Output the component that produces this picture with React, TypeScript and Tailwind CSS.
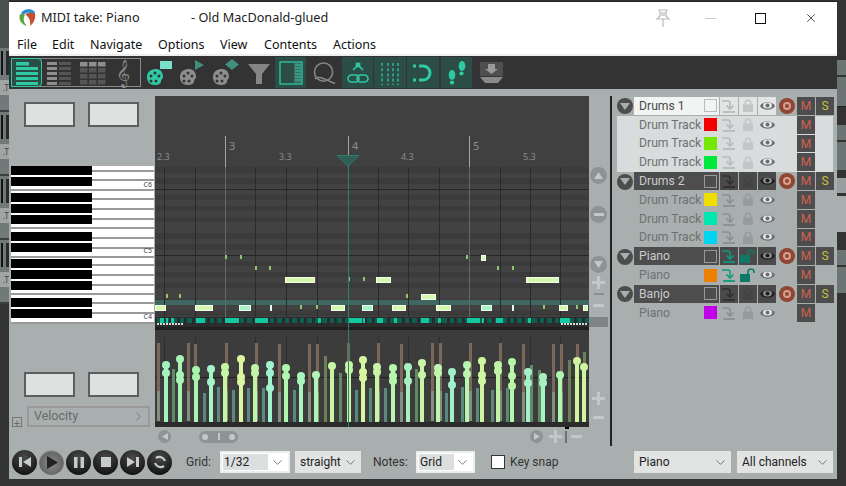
import { ChevronDown, ChevronRight, X } from 'lucide-react';

const FONT = "font-['Noto_Sans','Open_Sans',sans-serif]";
const UI_FONT = "font-['Roboto','Noto_Sans',sans-serif]";

const BLACK_KEYS = [166, 176.5, 193, 204, 215, 232, 243, 259, 270, 281, 298, 309];
const WHITE_LINES = [170, 179, 189, 198, 208, 218, 227, 237, 247, 256, 264, 274, 284, 293, 302, 312, 322];
const BEATS = [164, 195, 255, 286, 317, 378, 408, 439, 500, 530, 560];
const BARS = [225, 348, 469];

// x, y, width, colour kind (l = lime, t = teal, d = tiny dark green)
const NOTES: [number, number, number, string][] = [
  [225, 255, 1.5, 'd'], [240, 255, 2, 'd'], [255, 266, 1.5, 'd'], [269, 266, 2, 'd'],
  [285, 277, 30, 'l'], [348, 277, 2, 'd'], [363, 277, 1.5, 'd'], [376, 277, 15, 'l'],
  [166, 294, 1.5, 'd'], [179, 294, 2, 'd'], [406, 294, 1.5, 'd'], [421, 294, 15, 'l'],
  [155, 305, 11, 'l'], [195, 305, 18, 'l'], [239, 305, 12, 't'], [270, 305, 2, 't'],
  [300, 305, 2, 'd'], [316, 305, 2, 'd'], [331, 305, 14, 'l'], [362, 305, 11, 't'],
  [392, 305, 14, 'l'], [436, 305, 15, 'l'], [481, 305, 11, 't'], [512, 305, 1.5, 't'],
  [543, 305, 2, 'd'], [559, 305, 9, 'l'], [576, 305, 2, 'd'], [583, 305, 5, 'l'],
  [466, 255, 2, 'd'], [481, 255, 4.5, 'l'], [497, 266, 2, 'd'], [512, 266, 1.5, 'd'], [526, 277, 33, 'l'],
];

const STRIP_BRIGHT: [number, number][] = [
  [160, 4], [166, 2], [171, 3], [196, 9], [225, 14], [255, 13], [318, 3], [348, 14], [363, 2],
  [377, 6], [394, 3], [421, 8], [438, 3], [467, 13], [482, 2], [496, 7], [528, 3], [560, 10],
];

// x, knob tops, colour
const STEMS: [number, number[], string][] = [
  [165, [365, 373], '#a3f2bb'], [179, [359, 375, 380], '#a9f3b5'], [195, [370, 377], '#a8f5b0'],
  [210, [369, 382], '#a5f3c8'], [224, [367, 373], '#c6f5a5'], [240, [359, 377, 382], '#dcf5a0'],
  [254, [368, 373], '#c0f5a8'], [269, [365, 373, 388], '#a0f3d0'], [285, [368, 376], '#b0f5b0'],
  [300, [376, 381], '#a8f5c0'], [315, [375], '#b0f5b5'], [331, [366], '#c8f5a5'],
  [348, [365, 370], '#c8f5a5'], [362, [360, 372, 378], '#d8f5a0'], [376, [367, 372], '#c8f5a8'],
  [392, [368, 376, 381], '#b8f5b0'], [407, [367, 381], '#a8f0c0'], [421, [363, 375], '#c8f5a8'],
  [437, [368, 373], '#c0f5b0'], [451, [372, 385], '#a0f0c8'], [466, [365, 374], '#b8f5b0'],
  [481, [361, 375, 381], '#d0f5a0'], [497, [365, 371], '#c0f5a8'], [511, [362, 376, 386], '#b8f5a8'],
  [527, [372, 383], '#a5f0c8'], [542, [377, 383], '#a8f0c0'], [559, [375], '#b0f5b0'],
  [576, [361], '#d0f5a0'], [583, [367], '#d0f5a0'],
];
const BROWN = [157, 187, 194, 225, 255, 278, 308, 316, 347, 377, 400, 431, 439, 469, 499, 522, 552, 560, 576];
const DIM: [number, number, string][] = [
  [172, 369, '#5f8a63'], [203, 393, '#5a8a7e'], [217, 387, '#5a8a7e'], [232, 390, '#5a8a7e'], [247, 388, '#5a8a7e'],
  [262, 388, '#5a8a7e'], [293, 390, '#5a8a7e'], [324, 356, '#6b7f58'], [339, 373, '#5f8a63'], [355, 390, '#5a8a7e'],
  [369, 388, '#5a8a7e'], [384, 388, '#5a8a7e'], [415, 369, '#5f8a63'], [445, 393, '#5a8a7e'], [461, 387, '#5a8a7e'],
  [476, 388, '#5a8a7e'], [491, 390, '#5a8a7e'], [506, 388, '#5a8a7e'], [530, 365, '#5f8a63'], [538, 370, '#5f8a63'],
  [568, 360, '#6b7f58'], [583, 352, '#6b7f58'],
];

const NOTE_COLOR: Record<string, string> = {
  l: 'bg-[#d6f7b0] border border-white/70',
  t: 'bg-[#aaf3c8] border border-white/70',
  d: 'bg-[#8fc66f]',
};

// pitch class rows from the top of the roll, true = black key row
const ROWS = [true, false, true, false, false, true, false, true, false, true, false, false, true, false, true, false];

function EmptyButton() {
  return <div className="w-[51px] h-[25px] bg-[#dfe1e0] border-2 border-[#5c5f5f]" />;
}

function Logo() {
  return (
    <svg width="20" height="20" viewBox="0 0 20 20" className="shrink-0">
      <path d="M3 5 A9 9 0 0 1 17 4 L15 7 A6 6 0 0 0 5 8 Z" fill="#2b8fc9" />
      <path d="M2 6 C0 12 4 17 9 18 C5 14 5 10 7 7 Z" fill="#5aa63c" />
      <path d="M7 6 C11 4 15 6 17 5 C18 10 16 15 12 18 C13 13 11 9 7 6 Z" fill="#c8502e" />
    </svg>
  );
}

function TitleBar() {
  return (
    <div className="h-[32px] flex items-center pl-[9px] pr-[19px] text-[#222] text-[12.7px]">
      <Logo />
      <span className="ml-[3px] w-[150px]">MIDI take: Piano</span>
      <span>- Old MacDonald-glued</span>
      <svg width="18" height="20" viewBox="0 0 18 20" className="ml-auto mr-[33px]" fill="none" stroke="#b9b9b9" strokeWidth="1.2">
        <path d="M5 2 H13 L12 4 V8 L15 11 H3 L6 8 V4 Z M9 11 V19 M8 4 V8 M10 4 V8" />
      </svg>
      <div className="w-[11px] h-px bg-[#c9c9c9] mr-[39px]" />
      <div className="w-[11px] h-[11px] border border-[#111] mr-[38px]" />
      <X size={14} strokeWidth={1.2} color="#111" />
    </div>
  );
}

function MenuBar() {
  const items = [
    ['File', 'w-[35px]'], ['Edit', 'w-[38px]'], ['Navigate', 'w-[68px]'], ['Options', 'w-[62px]'],
    ['View', 'w-[44px]'], ['Contents', 'w-[69px]'], ['Actions', 'w-[60px]'],
  ];
  return (
    <div className="h-[22px] flex items-center pl-[8px] pt-[3px] text-[12.5px] text-[#111] bg-white border-b-2 border-[#eee]">
      {items.map(([label, w]) => (
        <span key={label} className={w}>{label}</span>
      ))}
    </div>
  );
}

function PianoBars() {
  const c = '#2fc9a4';
  return (
    <svg width="22" height="24" viewBox="0 0 22 24">
      <rect x="0" y="1" width="13" height="3.5" fill={c} />
      <rect x="0" y="6" width="22" height="3" fill={c} />
      <rect x="0" y="11" width="22" height="3" fill={c} />
      <rect x="0" y="16" width="22" height="3" fill={c} />
      <rect x="0" y="21" width="22" height="3" fill={c} />
    </svg>
  );
}

function Lanes() {
  return (
    <svg width="26" height="24" viewBox="0 0 26 24">
      {[1, 6, 11, 16, 21].map((y) => (
        <g key={y}>
          <rect x="0" y={y} width="10" height="3" fill="#8e8e8e" />
          <rect x="12" y={y} width="12" height="3" fill="#555" />
        </g>
      ))}
    </svg>
  );
}

function Cells() {
  return (
    <svg width="26" height="24" viewBox="0 0 26 24">
      {[0, 9, 18].map((x) =>
        [1, 7, 13, 19].map((y) => (
          <rect key={`${x}-${y}`} x={x} y={y} width="7.5" height="4.5" fill={y === 1 ? '#8e8e8e' : '#555'} />
        )),
      )}
    </svg>
  );
}

function Palette({ color, shape, shapeColor }: { color: string; shape: 'rect' | 'tri' | 'dia'; shapeColor: string }) {
  return (
    <svg width="28" height="28" viewBox="0 0 28 28">
      <path d="M1 18 C1 12 6 10 10 10 C15 10 17 14 17 18 C17 20 15 20 15 22 C15 25 12 26 9 26 C4 26 1 23 1 18 Z" fill={color} />
      <circle cx="5" cy="17" r="1.5" fill="#333" />
      <circle cx="9" cy="14" r="1.5" fill="#333" />
      <circle cx="13" cy="17" r="1.5" fill="#333" />
      <circle cx="5" cy="22" r="1.5" fill="#333" />
      <circle cx="10" cy="22" r="1.5" fill="#333" />
      {shape === 'rect' && <rect x="14" y="2" width="12" height="8" fill={shapeColor} />}
      {shape === 'tri' && <path d="M16 1 L25 6 L16 11 Z" fill={shapeColor} />}
      {shape === 'dia' && <path d="M20 0 L27 5.5 L20 11 L13 5.5 Z" fill={shapeColor} />}
    </svg>
  );
}

function ActiveTool({ children, width }: { children: React.ReactNode; width: string }) {
  return <div className={`${width} h-[31px] bg-[#2c4d46] flex items-center justify-center`}>{children}</div>;
}

function Toolbar() {
  return (
    <div className="h-[33px] bg-[#333] flex items-center pl-[2px]">
      <div className="w-[130px] h-[29px] border border-[#8a8a8a] flex items-center">
        <div className="w-[31px] h-[29px] -ml-px bg-[#2c4d46] border border-[#2fc9a4] rounded-r-sm flex items-center justify-center">
          <PianoBars />
        </div>
        <div className="w-[36px] flex justify-center"><Lanes /></div>
        <div className="w-[30px] flex justify-center"><Cells /></div>
        <span className="w-[30px] text-center text-[24px] leading-none text-[#8e8e8e] font-['DejaVu_Sans',sans-serif]">𝄞</span>
      </div>
      <div className="ml-[5px] w-[33px]"><Palette color="#2fc9a4" shape="rect" shapeColor="#79e0c9" /></div>
      <div className="w-[33px]"><Palette color="#8e8e8e" shape="tri" shapeColor="#3f8f7c" /></div>
      <div className="w-[37px]"><Palette color="#8e8e8e" shape="dia" shapeColor="#3f8f7c" /></div>
      <svg width="22" height="22" viewBox="0 0 22 22" className="ml-[-1px]">
        <path d="M0 2 H22 L14 12 V22 H8 V12 Z" fill="#858585" />
      </svg>
      <div className="ml-[5px]">
        <ActiveTool width="w-[31px]">
          <svg width="24" height="24" viewBox="0 0 24 24" fill="none">
            <rect x="1" y="1" width="22" height="22" stroke="#2fc9a4" strokeWidth="1.3" />
            <rect x="15" y="2" width="7" height="20" fill="#3f6f64" />
            <path d="M16 4 H22 M16 7 H22 M16 10 H22 M16 13 H22 M16 16 H22 M16 19 H22" stroke="#2fc9a4" strokeWidth="1" />
          </svg>
        </ActiveTool>
      </div>
      <svg width="23" height="24" viewBox="0 0 24 24" fill="none" stroke="#868686" strokeWidth="1.6" className="ml-[7px] mr-[6px]">
        <circle cx="11" cy="11" r="9.5" />
        <path d="M2 18 C8 14 14 20 23 23" />
      </svg>
      <ActiveTool width="w-[31px] mr-[1px]">
        <svg width="22" height="24" viewBox="0 0 22 24" fill="none" stroke="#2fc9a4" strokeWidth="1.6">
          <path d="M6 9 L11 4 L16 9" />
          <rect x="9.5" y="2.5" width="3" height="3" fill="#2fc9a4" />
          <rect x="1" y="14" width="11" height="7" rx="3.5" />
          <rect x="10" y="14" width="11" height="7" rx="3.5" />
        </svg>
      </ActiveTool>
      <ActiveTool width="w-[32px] mr-[1px]">
        <svg width="18" height="24" viewBox="0 0 18 24" stroke="#2fc9a4" strokeWidth="1.3" strokeDasharray="3 2.2">
          <path d="M1 2 V24 M7 2 V24 M12 2 V24 M17 2 V24" />
        </svg>
      </ActiveTool>
      <ActiveTool width="w-[32px] mr-[2px]">
        <svg width="20" height="20" viewBox="0 0 20 20" fill="none" stroke="#2fc9a4" strokeWidth="3">
          <path d="M6 3 H10 A7 7 0 0 1 10 17 H6 M0 3 H3 M0 17 H3" />
        </svg>
      </ActiveTool>
      <ActiveTool width="w-[31px]">
        <svg width="20" height="24" viewBox="0 0 20 24" fill="#2fc9a4">
          <ellipse cx="5" cy="14" rx="3.3" ry="5" />
          <ellipse cx="5" cy="21.5" rx="2.2" ry="2" />
          <ellipse cx="15" cy="5" rx="3.3" ry="5" />
          <ellipse cx="14.5" cy="12.5" rx="2.2" ry="2" />
        </svg>
      </ActiveTool>
      <svg width="23" height="21" viewBox="0 0 23 21" className="ml-[8px]">
        <rect x="0" y="0" width="23" height="14" fill="#4f4f4f" />
        <path d="M8 2 H15 V7 H18 L11.5 12 L5 7 H8 Z" fill="#999" />
        <path d="M0 15 H23 L18 21 H5 Z" fill="#8a8a8a" />
      </svg>
    </div>
  );
}

function Piano() {
  return (
    <div className="relative w-[143px] h-[157px] ml-[2px] mt-[39px] bg-white">
      {WHITE_LINES.map((y) => (
        <div key={y} className="absolute left-0 right-0 h-[1.5px] bg-[#9a9a9a]" style={{ top: y - 166 }} />
      ))}
      {BLACK_KEYS.map((y) => (
        <div key={y} className="absolute left-0 w-[81px] h-[9px] bg-black" style={{ top: y - 166 }} />
      ))}
      {[['C6', 181], ['C5', 247], ['C4', 313]].map(([label, y]) => (
        <span
          key={label}
          className="absolute right-[2px] text-[7px] leading-[8px] text-[#444]"
          style={{ top: (y as number) - 166 }}
        >
          {label}
        </span>
      ))}
    </div>
  );
}

function LeftPanel() {
  return (
    <div className="w-[146px] shrink-0 pt-[13px] flex flex-col">
      <div className="flex gap-[13px] pl-[15px]"><EmptyButton /><EmptyButton /></div>
      <Piano />
      <div className="flex gap-[13px] pl-[15px] mt-[49px]"><EmptyButton /><EmptyButton /></div>
      <div className="flex items-end mt-[9px] pl-[3px]">
        <div className="w-[10px] h-[10px] border border-[#777] mr-[5px] flex items-center justify-center text-[#666] text-[11px] leading-none">+</div>
        <div className={`w-[123px] h-[21px] border-2 border-[#999] flex items-center justify-between pl-[5px] pr-[2px] text-[12.5px] text-[#666a6a] ${UI_FONT}`}>
          Velocity
          <ChevronRight size={15} strokeWidth={1.2} color="#666a6a" />
        </div>
      </div>
    </div>
  );
}

function Ruler() {
  const labels: [string, number, number, string][] = [
    ['2.3', 157, 151, 'text-[9px]'], ['3', 229, 140, 'text-[11px]'], ['3.3', 279, 151, 'text-[9px]'],
    ['4', 352, 140, 'text-[11px]'], ['4.3', 401, 151, 'text-[9px]'], ['5', 473, 140, 'text-[11px]'], ['5.3', 523, 151, 'text-[9px]'],
  ];
  return (
    <div className="relative h-[71px] bg-[#404040] shrink-0">
      {BARS.map((x) => (
        <div key={x} className="absolute w-px top-[40px] bottom-0 bg-[#a5a5a5]" style={{ left: x - 155 }} />
      ))}
      {labels.map(([t, x, y, size]) => (
        <span key={t} className={`absolute leading-[12px] text-[#8c8c8c] ${size}`} style={{ left: x - 155, top: y - 96 }}>
          {t}
        </span>
      ))}
    </div>
  );
}

function NoteGrid() {
  const rows = Array.from({ length: 28 }, (_, i) => ROWS[i < 4 ? i : 4 + ((i - 4) % 12)]);
  return (
    <div className="relative h-[150px] shrink-0 overflow-hidden bg-[#3d3d3d]">
      <div className="flex flex-col">
        {rows.map((dark, i) => (
          <div key={i} className={`h-[5.5px] shrink-0 ${dark ? 'bg-[#3b3b3b]' : 'bg-[#424242]'}`} />
        ))}
      </div>
      <div className="absolute left-0 right-0 top-[132.5px] h-[5.5px] bg-[#3f6660]" />
      <div className="absolute left-0 right-0 top-[22px] h-px bg-[#252525]" />
      <div className="absolute left-0 right-0 top-[88px] h-px bg-[#252525]" />
      {BEATS.map((x) => (
        <div key={x} className="absolute top-0 bottom-0 w-px bg-[#2a2a2a]" style={{ left: x - 155 }} />
      ))}
      {BARS.map((x) => (
        <div key={x} className="absolute top-0 bottom-0 w-px bg-[#666]" style={{ left: x - 155 }} />
      ))}
      {NOTES.map(([x, y, w, kind], i) => (
        <div
          key={i}
          className={`absolute ${NOTE_COLOR[kind]}`}
          style={{ left: x - 155, top: y - 167, width: w, height: kind === 'd' ? 4 : 5.5 }}
        />
      ))}
    </div>
  );
}

function NoteStrip() {
  const dims = Array.from({ length: 58 }, (_, i) => 157 + i * 7.5);
  const dots = [...Array.from({ length: 9 }, (_, i) => 157 + i * 3), ...Array.from({ length: 9 }, (_, i) => 561 + i * 3)];
  return (
    <div className="relative h-[10px] shrink-0 bg-[#2b2b2b]">
      {dims.map((x) => (
        <div key={x} className="absolute top-[1px] h-[5px] w-[4.5px] bg-[#0d5f50]" style={{ left: x - 155 }} />
      ))}
      {STRIP_BRIGHT.map(([x, w]) => (
        <div key={x} className="absolute top-[1px] h-[5px] bg-[#14c7a0]" style={{ left: x - 155, width: w }} />
      ))}
      {dots.map((x) => (
        <div key={x} className="absolute top-[6px] h-[2px] w-[2px] bg-[#d8d8d8]" style={{ left: x - 155 }} />
      ))}
    </div>
  );
}

function VelocityLane() {
  return (
    <div className="relative h-[97px] shrink-0 bg-[#3c3c3c] overflow-hidden">
      <div className="absolute left-0 right-0 top-[47px] h-px bg-[#222]" />
      {BEATS.map((x) => (
        <div key={x} className="absolute top-[7px] bottom-0 w-px bg-[#2c2c2c]" style={{ left: x - 155 }} />
      ))}
      {BROWN.map((x) => (
        <div key={x} className="absolute w-[3px] flex flex-col" style={{ left: x - 155, top: x % 2 ? 13 : 14, height: 78 }}>
          <div className="flex-1 bg-[#7a685a]" />
          <div className="h-[30px] bg-[#84907f]" />
        </div>
      ))}
      {DIM.map(([x, y, c]) => (
        <div key={x} className="absolute w-[3px]" style={{ left: x - 155, top: y - 330, height: 422 - y, backgroundColor: c }} />
      ))}
      {STEMS.map(([x, tops, color]) => (
        <div key={x}>
          <div className="absolute w-[3.5px]" style={{ left: x - 156, top: tops[0] - 330, height: 422 - tops[0], backgroundColor: color }} />
          {tops.map((t) => (
            <div
              key={t}
              className="absolute w-[8px] h-[8px] rounded-full"
              style={{ left: x - 158.5, top: t - 334, backgroundColor: color }}
            />
          ))}
        </div>
      ))}
      <div className="absolute left-0 right-0 bottom-0 h-[5px] bg-[#2b2b2b]" />
    </div>
  );
}

function RoundBtn({ children, size = 'w-[17px] h-[17px]' }: { children?: React.ReactNode; size?: string }) {
  return <div className={`${size} rounded-full bg-[#8e9393] flex items-center justify-center`}>{children}</div>;
}

function Glyph({ d }: { d: string }) {
  return (
    <svg width="13" height="13" viewBox="0 0 13 13">
      <path d={d} fill="#c4c8c8" />
    </svg>
  );
}

const PLUS = 'M5 0 H8 V5 H13 V8 H8 V13 H5 V8 H0 V5 H5 Z';
const MINUS = 'M1 5 H12 V8 H1 Z';

function ScrollColumn() {
  return (
    <div className="relative w-[19px] flex flex-col items-center shrink-0">
      <div className="mt-[71px]"><RoundBtn><svg width="9" height="7"><path d="M4.5 0 L9 7 H0 Z" fill="#c4c8c8" /></svg></RoundBtn></div>
      <div className="mt-[22px]"><RoundBtn><div className="w-[10px] h-[3px] bg-[#c4c8c8]" /></RoundBtn></div>
      <div className="mt-[33px]"><RoundBtn><svg width="9" height="7"><path d="M0 0 H9 L4.5 7 Z" fill="#c4c8c8" /></svg></RoundBtn></div>
      <div className="mt-[3px]"><Glyph d={PLUS} /></div>
      <div className="h-[2px] w-[10px] mt-[4px] bg-[#8c9090]" />
      <div className="mt-[4px]"><Glyph d={MINUS} /></div>
      <div className="absolute left-0 right-0 top-[221px] h-[10px] bg-[#808484]" />
      <div className="absolute top-[296px]"><Glyph d={PLUS} /></div>
      <div className="absolute top-[315px]"><Glyph d={MINUS} /></div>
    </div>
  );
}

function Scrollbar() {
  return (
    <div className="h-[19px] flex items-center relative">
      <div className="ml-[3px]">
        <RoundBtn size="w-[13px] h-[13px]"><svg width="6" height="7"><path d="M6 0 V7 L0 3.5 Z" fill="#c4c8c8" /></svg></RoundBtn>
      </div>
      <div className="ml-[28px] w-[39px] h-[12px] rounded-full bg-[#8e9393] flex items-center justify-between px-[3px]">
        <div className="w-[6px] h-[6px] rounded-full bg-[#c4c8c8]" />
        <div className="w-[2px] h-[7px] bg-[#c4c8c8]" />
        <div className="w-[6px] h-[6px] rounded-full bg-[#c4c8c8]" />
      </div>
      <div className="ml-[292px]">
        <RoundBtn size="w-[13px] h-[13px]"><svg width="6" height="7"><path d="M0 0 V7 L6 3.5 Z" fill="#c4c8c8" /></svg></RoundBtn>
      </div>
      <div className="ml-[6px] flex items-center">
        <Glyph d={PLUS} />
        <div className="w-[2px] h-[12px] bg-[#6c7070] ml-[3px] mr-[3px]" />
        <Glyph d={MINUS} />
      </div>
      <div className="absolute left-[410px] top-0 w-[4px] h-[2px] bg-black" />
    </div>
  );
}

function PianoRoll() {
  return (
    <div className="w-[453px] shrink-0 pt-[7px] flex flex-col">
      <div className="flex h-[331px]">
        <div className="relative w-[434px] flex flex-col shrink-0">
          <Ruler />
          <NoteGrid />
          <NoteStrip />
          <div className="h-[3px] bg-[#1f1f1f] shrink-0" />
          <VelocityLane />
          <div className="absolute w-px top-[59px] bottom-0 left-[193px] bg-[#2f7f72]" />
          <svg width="24" height="12" viewBox="0 0 24 12" className="absolute left-[181px] top-[59px]">
            <path d="M1 0.5 H23 L12 11 Z" fill="#2f5f56" stroke="#2f7f72" />
          </svg>
        </div>
        <ScrollColumn />
      </div>
      <Scrollbar />
    </div>
  );
}

type Track = { name: string; swatch?: string; kind: 'parentLight' | 'childLight' | 'parent' | 'child'; live?: boolean };

const TRACKS: Track[] = [
  { name: 'Drums 1', kind: 'parentLight' },
  { name: 'Drum Track', swatch: 'bg-[#f00000]', kind: 'childLight' },
  { name: 'Drum Track', swatch: 'bg-[#74e800]', kind: 'childLight' },
  { name: 'Drum Track', swatch: 'bg-[#00e83c]', kind: 'childLight' },
  { name: 'Drums 2', kind: 'parent' },
  { name: 'Drum Track', swatch: 'bg-[#f0de00]', kind: 'child' },
  { name: 'Drum Track', swatch: 'bg-[#00e8b0]', kind: 'child' },
  { name: 'Drum Track', swatch: 'bg-[#00d4ee]', kind: 'child' },
  { name: 'Piano', kind: 'parent', live: true },
  { name: 'Piano', swatch: 'bg-[#ee8000]', kind: 'child', live: true },
  { name: 'Banjo', kind: 'parent' },
  { name: 'Piano', swatch: 'bg-[#c000e8]', kind: 'child' },
];

function RouteIcon({ color }: { color: string }) {
  return (
    <svg width="14" height="14" viewBox="0 0 14 14" fill="none" stroke={color} strokeWidth="1.6">
      <path d="M0 2 H6 Q8 2 8 4 V9" />
      <path d="M4.5 6.5 L8 10 L11.5 6.5" />
      <path d="M1 13 H13" strokeWidth="1.8" />
    </svg>
  );
}

function LockIcon({ color, open }: { color: string; open?: boolean }) {
  if (open) {
    return (
      <svg width="16" height="14" viewBox="0 0 16 14">
        <rect x="0" y="6" width="10" height="8" fill={color} />
        <path d="M8 6 V4 A3 3 0 0 1 14 4 V5" fill="none" stroke={color} strokeWidth="1.6" />
      </svg>
    );
  }
  return (
    <svg width="10" height="13" viewBox="0 0 10 13">
      <rect x="0" y="5.5" width="10" height="7.5" fill={color} />
      <path d="M2.3 6 V4 A2.7 2.7 0 0 1 7.7 4 V6" fill="none" stroke={color} strokeWidth="1.4" />
    </svg>
  );
}

function EyeIcon({ color, pupil }: { color: string; pupil: string }) {
  return (
    <svg width="15" height="10" viewBox="0 0 15 10">
      <path d="M0 5 C3 0 12 0 15 5 C12 10 3 10 0 5 Z" fill={color} />
      <ellipse cx="7.5" cy="4.5" rx="4.5" ry="3" fill={pupil} />
      <circle cx="7.5" cy="4.5" r="2" fill={color} />
    </svg>
  );
}

function TrackRow({ track }: { track: Track }) {
  const parent = track.kind === 'parent' || track.kind === 'parentLight';
  const light = track.kind === 'parentLight';
  const dark = track.kind === 'parent';
  const childLight = track.kind === 'childLight';
  const rowBg = childLight ? 'bg-[#d8dcdc]' : '';
  const nameBg = light ? 'bg-[#f2f3f3]' : dark ? 'bg-[#4d4d4d]' : '';
  const cellBg = light ? 'bg-[#e3e5e5]' : dark ? 'bg-[#4a4a4a]' : '';
  const nameText = dark ? 'text-[#c8cccc]' : light ? 'text-[#4a4a4a]' : 'text-[#6d7272]';
  const routeColor = track.live ? '#0e9a7e' : dark ? '#303030' : childLight || light ? '#b5baba' : '#8b9090';
  const lockColor = track.live ? '#0e7a66' : dark ? '#444' : childLight || light ? '#c2c6c6' : '#969b9b';
  const eye = dark ? '#1f1f1f' : '#6a6e6e';
  const pupil = dark ? '#8d8d8d' : '#e8eaea';
  return (
    <div className={`h-[18.8px] flex items-stretch shrink-0 ${UI_FONT}`}>
      <div className="w-[17px] shrink-0 flex items-center">
        {parent && (
          <div className="w-[16px] h-[16px] rounded-full bg-[#4d4d4d] flex items-center justify-center">
            <svg width="10" height="7"><path d="M0 0 H10 L5 7 Z" fill="#a9afae" /></svg>
          </div>
        )}
      </div>
      <div className={`flex items-stretch gap-px pb-px ${rowBg} ${childLight ? 'w-[216px] -ml-[17px] pl-[17px]' : ''}`}>
        <div className={`w-[85px] shrink-0 flex items-center justify-between pl-[5px] pr-[2px] whitespace-nowrap ${nameBg} ${nameText} text-[12.2px]`}>
          <span>{track.name}</span>
          {track.swatch ? (
            <div className={`w-[13px] h-[13px] ${track.swatch}`} />
          ) : (
            <div className={`w-[13px] h-[13px] border ${dark ? 'border-[#999]' : 'border-[#b8bcbc]'}`} />
          )}
        </div>
        <div className={`w-[18px] shrink-0 flex items-center justify-center ${cellBg}`}><RouteIcon color={routeColor} /></div>
        <div className={`w-[18px] shrink-0 flex items-center justify-center ${cellBg}`}><LockIcon color={lockColor} open={track.live} /></div>
        <div className={`w-[18px] shrink-0 flex items-center justify-center ${cellBg}`}><EyeIcon color={eye} pupil={pupil} /></div>
        <div className="w-[19px] shrink-0 flex items-center justify-center">
          {parent && (
            <div className="w-[16px] h-[16px] rounded-full bg-[#8f4632] flex items-center justify-center">
              <div className="w-[8px] h-[8px] rounded-full border-2 border-[#d8a090]" />
            </div>
          )}
        </div>
        <div className="w-[18px] shrink-0 bg-[#4d4d4d] flex items-center justify-center text-[#d0604f] text-[12px]">M</div>
        <div className={`w-[18px] shrink-0 flex items-center justify-center text-[#c8c040] text-[12px] ${parent ? 'bg-[#4d4d4d]' : ''}`}>
          {parent ? 'S' : ''}
        </div>
      </div>
    </div>
  );
}

function TrackPanel() {
  return (
    <div className="flex-1 flex pt-[7px]">
      <div className="w-[2px] ml-[2px] bg-[#222] shrink-0" />
      <div className="ml-[5px] pt-[1px] flex flex-col">
        {TRACKS.map((t, i) => (
          <TrackRow key={i} track={t} />
        ))}
      </div>
    </div>
  );
}

function TransportBtn({ children, lit }: { children: React.ReactNode; lit?: boolean }) {
  return (
    <div
      className={`w-[25px] h-[25px] rounded-full flex items-center justify-center shrink-0 ${
        lit
          ? 'bg-[radial-gradient(circle_at_50%_55%,#8a8c8c,#666_62%,#e4dede_85%)]'
          : 'bg-[radial-gradient(circle_at_50%_30%,#4a4a4a,#1b1b1b_70%,#000)]'
      }`}
    >
      {children}
    </div>
  );
}

function Select({ label, width, highlight, framed }: { label: string; width: string; highlight?: string; framed?: boolean }) {
  return (
    <div
      className={`${width} h-[22px] flex items-center justify-between pr-[3px] text-[12px] text-[#222] shrink-0 ${
        framed ? 'bg-white border-2 border-[#eee] pl-px' : 'bg-[#e2e3e3] pl-[4px]'
      }`}
    >
      <span className={`${highlight ?? ''} h-[16px] leading-[16px] pl-px`}>{label}</span>
      <ChevronDown size={15} strokeWidth={1.2} color="#555" />
    </div>
  );
}

function BottomBar() {
  const ic = '#c8cccc';
  return (
    <div className={`h-[32px] flex items-center text-[12px] text-[#333] ${UI_FONT}`}>
      <div className="ml-[3px] flex gap-[2px] items-center w-[160px]">
        <TransportBtn><svg width="12" height="12"><path d="M0 1 H3 V11 H0 Z M12 1 V11 L4 6 Z" fill={ic} /></svg></TransportBtn>
        <TransportBtn lit><svg width="12" height="13"><path d="M1 0 L12 6.5 L1 13 Z" fill="#222" /></svg></TransportBtn>
        <TransportBtn><svg width="10" height="11"><path d="M0 0 H3.5 V11 H0 Z M6.5 0 H10 V11 H6.5 Z" fill={ic} /></svg></TransportBtn>
        <TransportBtn><div className="w-[10px] h-[10px] bg-[#c8cccc]" /></TransportBtn>
        <TransportBtn><svg width="12" height="12"><path d="M0 1 L8 6 L0 11 Z M9 1 H12 V11 H9 Z" fill={ic} /></svg></TransportBtn>
        <TransportBtn>
          <svg width="14" height="14" viewBox="0 0 14 14" fill="none" stroke={ic} strokeWidth="2.2">
            <path d="M3 3 A6 6 0 0 1 12 6 M11 11 A6 6 0 0 1 2 8" />
          </svg>
        </TransportBtn>
      </div>
      <span className="ml-[14px] w-[34px]">Grid:</span>
      <Select label="1/32" width="w-[70px]" framed highlight="bg-[#dcdfdf] w-[45px]" />
      <div className="w-[5px]" />
      <Select label="straight" width="w-[66px]" />
      <span className="ml-[12px] w-[43px]">Notes:</span>
      <Select label="Grid" width="w-[59px]" framed highlight="bg-[#dcdfdf] w-[35px]" />
      <div className="ml-[16px] w-[14px] h-[14px] bg-white border border-[#333] shrink-0" />
      <span className="ml-[5px] w-[124px]">Key snap</span>
      <Select label="Piano" width="w-[97px]" />
      <div className="w-[6px]" />
      <Select label="All channels" width="w-[96px]" />
    </div>
  );
}

function LeftBackdrop() {
  const block = (
    <div className="h-[64px] flex flex-col border-b-2 border-[#3a3e3e] bg-[#727a79] shrink-0">
      <div className="h-[24px] mt-[3px] flex gap-[3px] pl-px">
        <div className="w-[2px] bg-[#111]" />
        <div className="w-[3px] bg-[#2a2a2a]" />
      </div>
      <div className="h-[15px] mt-[5px] bg-[#a0a5a4] text-[8px] leading-[15px] text-[#444] text-right">.T</div>
    </div>
  );
  return (
    <div className="w-[9px] shrink-0 flex flex-col overflow-hidden">
      <div className="h-[48px] bg-[#4b5251]" />
      {block}
      {block}
      {block}
      {block}
      <div className="flex-1 bg-[#333]" />
    </div>
  );
}

function RightBackdrop() {
  return (
    <div className="w-[9px] shrink-0 flex flex-col bg-[#333]">
      <div className="h-[20px]" />
      <div className="h-[15px] bg-[#6a7574] mt-[40px]" />
      <div className="h-[30px] bg-[#6a7574] mt-[2px] border-b border-[#222]" />
      <div className="h-[15px] mt-[18px] bg-[#6a7574]" />
      <div className="h-[28px] mt-[2px] bg-[#6a7574]" />
      <div className="h-[15px] mt-[8px] bg-[#9aa0a0]" />
      <div className="h-[36px] mt-[3px] bg-[#a9afae]" />
      <div className="h-[15px] mt-[18px] bg-[#6a7574]" />
      <div className="h-[26px] mt-[2px] bg-[#6a7574]" />
    </div>
  );
}

export default function App() {
  return (
    <div className={`w-[846px] h-[486px] flex bg-[#333] overflow-hidden ${FONT}`}>
      <LeftBackdrop />
      <div className="w-[828px] h-[478px] mt-[1px] flex flex-col border-t border-[#222] shrink-0">
        <div className="bg-white">
          <TitleBar />
          <MenuBar />
        </div>
        <Toolbar />
        <div className="flex-1 bg-[#a9afae] flex flex-col">
          <div className="flex h-[357px]">
            <LeftPanel />
            <PianoRoll />
            <TrackPanel />
          </div>
          <BottomBar />
        </div>
      </div>
      <RightBackdrop />
    </div>
  );
}
